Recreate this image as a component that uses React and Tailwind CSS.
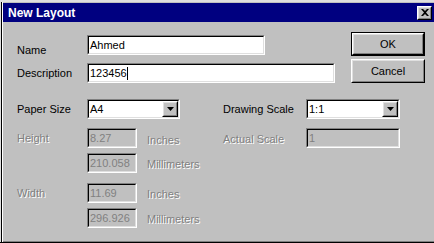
import React from "react";

const raised =
  "border border-t-white border-l-white border-b-black border-r-black";
const raisedInner =
  "border border-t-[#dfdfdf] border-l-[#dfdfdf] border-b-[#808080] border-r-[#808080]";
const dim = "text-[#808080] [text-shadow:1px_1px_0_#fff]";

function Sunken({ className = "", bg = "bg-white", children }) {
  return (
    <div
      className={`border border-t-[#808080] border-l-[#808080] border-b-white border-r-white h-[20px] ${className}`}
    >
      <div
        className={`border border-t-black border-l-black border-b-[#dfdfdf] border-r-[#dfdfdf] h-full flex ${bg}`}
      >
        {children}
      </div>
    </div>
  );
}

function Field({ value, className, disabled, caret }) {
  return (
    <Sunken className={className} bg={disabled ? "bg-[#c0c0c0]" : "bg-white"}>
      <div
        className={`flex items-center pl-[1px] ${
          disabled ? "text-[#808080]" : "text-black"
        }`}
      >
        <span>{value}</span>
        {caret && <span className="w-px h-[13px] bg-black" />}
      </div>
    </Sunken>
  );
}

function Combo({ value, className }) {
  return (
    <Sunken className={className}>
      <span className="flex-1 pl-[1px] flex items-center">{value}</span>
      <div className={`${raised} w-[16px] bg-[#c0c0c0]`}>
        <div className={`${raisedInner} h-full flex items-center justify-center`}>
          <svg width="7" height="4" viewBox="0 0 7 4">
            <path d="M0 0h7L3.5 4z" fill="#000" />
          </svg>
        </div>
      </div>
    </Sunken>
  );
}

function Button({ label, isDefault }) {
  const body = (
    <div className={`${raised} h-full bg-[#c0c0c0]`}>
      <div className={`${raisedInner} h-full flex items-center justify-center`}>
        {label}
      </div>
    </div>
  );
  if (isDefault) {
    return <div className="border border-black h-[24px]">{body}</div>;
  }
  return <div className="h-[24px]">{body}</div>;
}

function Label({ children, className = "" }) {
  return <span className={`w-[70px] shrink-0 ${className}`}>{children}</span>;
}

export default function App() {
  return (
    <div className="w-[434px] h-[243px] bg-[#dfdfdf] pl-[1px] pt-[1px] border-b border-b-black font-['Liberation_Sans',Arial,sans-serif] text-[11px] text-black overflow-hidden">
      <div className="h-full bg-white border-l border-l-black border-b border-b-black">
        <div className="h-full ml-[1px] mt-[1px] bg-[#c0c0c0] border-b border-b-[#808080] flex flex-col">
          {/* title bar */}
          <div className="h-[19px] mt-[1px] shrink-0 bg-[#000080] flex items-center justify-between pl-[5px] pr-[2px]">
            <span className="text-white font-bold text-[12px]">New Layout</span>
            <div className={`${raised} w-[15px] h-[14px] bg-[#c0c0c0]`}>
              <div className={`${raisedInner} h-full flex items-center justify-center`}>
                <svg width="8" height="7" viewBox="0 0 8 7">
                  <path d="M0 0h2l2 2 2-2h2L5 3.5 8 7H6L4 5 2 7H0l3-3.5z" fill="#000" />
                </svg>
              </div>
            </div>
          </div>

          {/* name / description + buttons */}
          <div className="flex">
            <div className="w-[348px] pl-[14px] pt-[13px] flex flex-col gap-[8px]">
              <div className="flex items-center h-[20px]">
                <Label className="translate-y-[5px]">Name</Label>
                <Field value="Ahmed" className="w-[178px]" />
              </div>
              <div className="flex items-center h-[20px]">
                <Label>Description</Label>
                <Field value="123456" className="w-[248px]" caret />
              </div>
            </div>
            <div className="w-[74px] pt-[10px] flex flex-col gap-[3px]">
              <Button label="OK" isDefault />
              <Button label="Cancel" />
            </div>
          </div>

          {/* paper / scale */}
          <div className="pl-[14px] mt-[16px] flex flex-col">
            <div className="flex items-center h-[20px]">
              <div className="w-[206px] flex items-center">
                <Label>Paper Size</Label>
                <Combo value="A4" className="w-[93px]" />
              </div>
              <span className="w-[83px]">Drawing Scale</span>
              <Combo value="1:1" className="w-[94px]" />
            </div>

            <div className="flex items-center h-[20px] mt-[9px]">
              <div className="w-[206px] flex items-center">
                <Label className={dim}>Height</Label>
                <Field value="8.27" className="w-[50px]" disabled />
                <span className={`ml-[10px] translate-y-[2px] ${dim}`}>Inches</span>
              </div>
              <span className={`w-[83px] translate-y-[1px] ${dim}`}>Actual Scale</span>
              <Field value="1" className="w-[94px]" disabled />
            </div>

            <div className="flex items-center h-[20px] mt-[5px]">
              <Label />
              <Field value="210.058" className="w-[50px]" disabled />
              <span className={`ml-[10px] translate-y-[1px] ${dim}`}>Millimeters</span>
            </div>

            <div className="flex items-center h-[20px] mt-[10px]">
              <Label className={dim}>Width</Label>
              <Field value="11.69" className="w-[50px]" disabled />
              <span className={`ml-[10px] translate-y-[1px] ${dim}`}>Inches</span>
            </div>

            <div className="flex items-center h-[20px] mt-[5px]">
              <Label />
              <Field value="296.926" className="w-[50px]" disabled />
              <span className={`ml-[10px] translate-y-[1px] ${dim}`}>Millimeters</span>
            </div>
          </div>
        </div>
      </div>
    </div>
  );
}
